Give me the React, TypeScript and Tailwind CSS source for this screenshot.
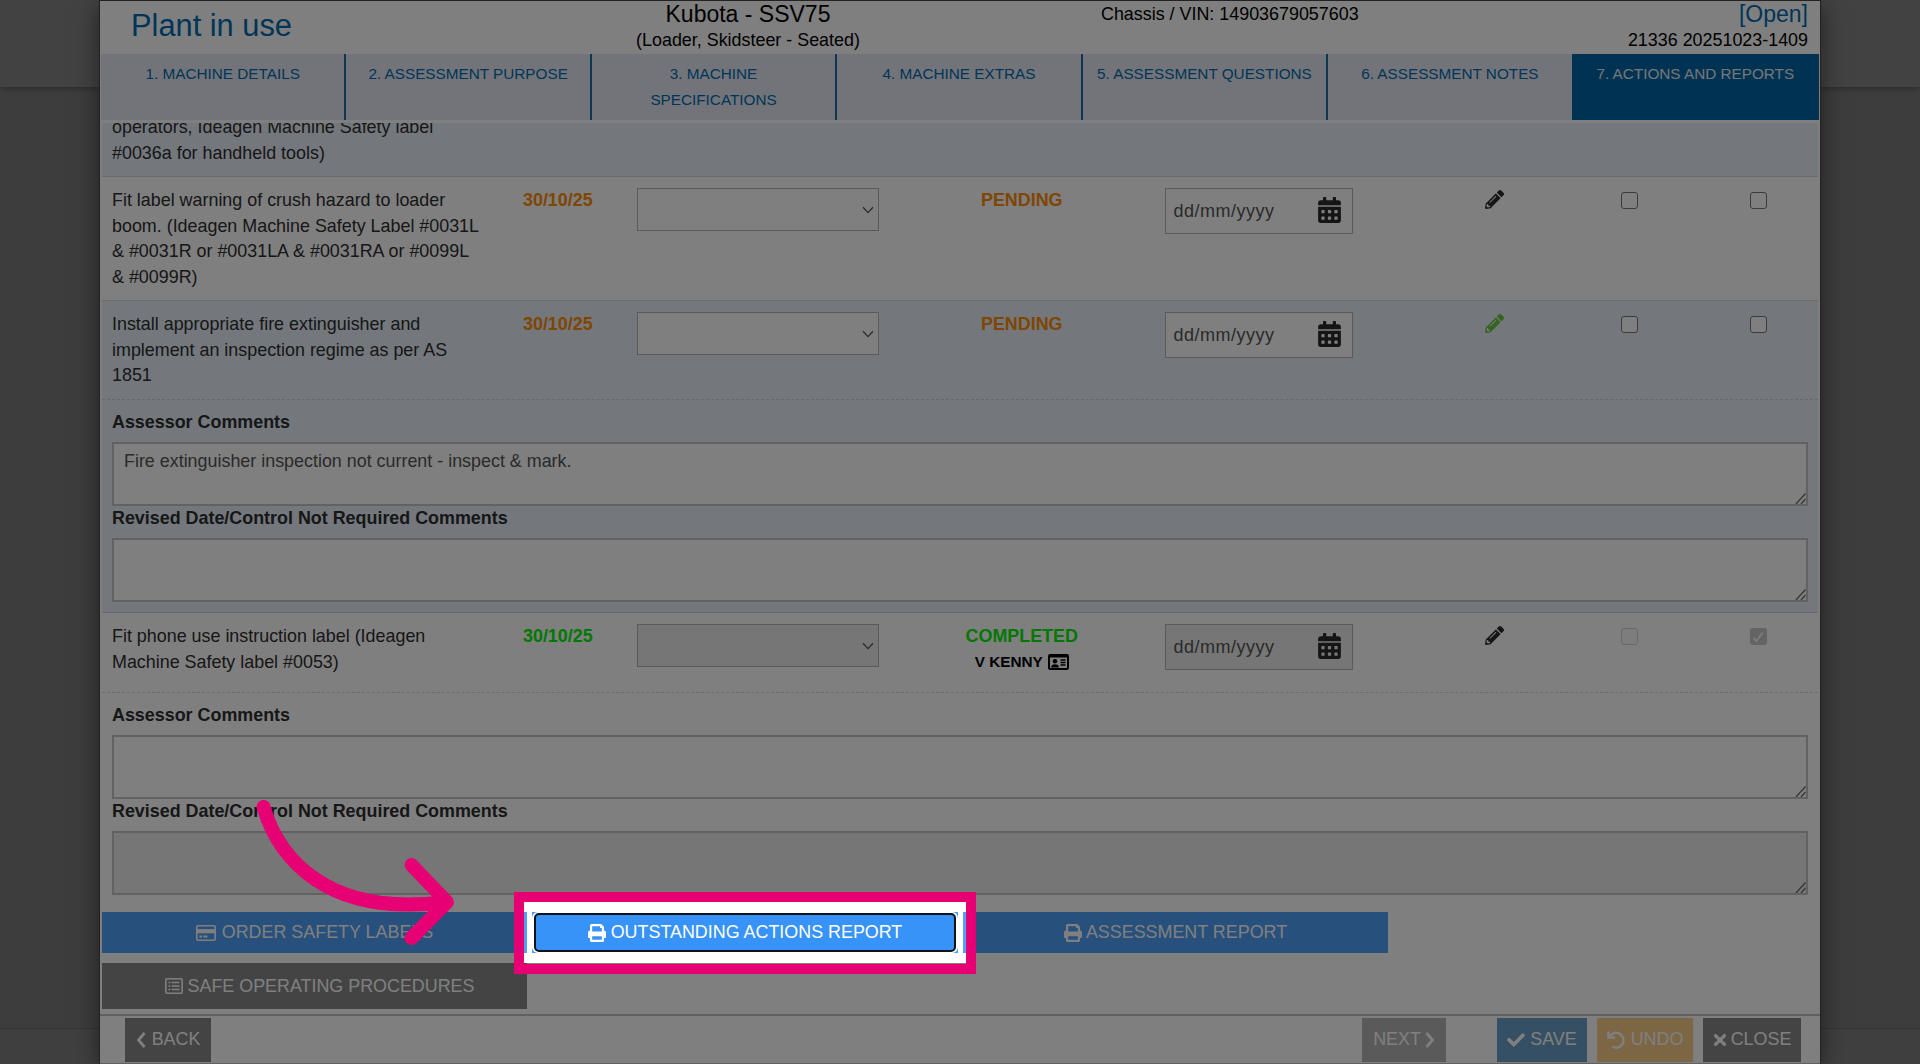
import React from "react";
import {
  FaPencilAlt,
  FaCalendarAlt,
  FaCheck,
  FaTimes,
} from "react-icons/fa";

type IconProps = { className?: string };

function ChevronIcon({ flip }: { flip?: boolean }) {
  return (
    <svg viewBox="0 0 10 16" className="h-4 w-[10px]" fill="none" stroke="currentColor" strokeWidth="2.800">
      <path d={flip ? "M1.500 1L7.500 8L1.500 15" : "M8.500 1L2.500 8L8.500 15"} />
    </svg>
  );
}

function PrinterIcon({ className }: IconProps) {
  return (
    <svg viewBox="0 0 18 18" className={className} fill="currentColor">
      <path
        fillRule="evenodd"
        d="M2 1.5A1.5 1.5 0 0 1 3.5 0H13.200L16 2.800V6.500A2 2 0 0 1 18 8.500V13a1 1 0 0 1-1 1H16v2.500A1.500 1.500 0 0 1 14.500 18h-11A1.500 1.500 0 0 1 2 16.500V14H1a1 1 0 0 1-1-1V8.500A2 2 0 0 1 2 6.500ZM4.200 2.200V7.500H13.800V4H12V2.200ZM4.200 12.200V15.800H13.800V12.200Z"
      />
    </svg>
  );
}

function CardIcon() {
  return (
    <svg viewBox="0 0 20 16" className="h-4 w-5" fill="none" stroke="currentColor" strokeWidth="1.600">
      <rect x="0.800" y="0.800" width="18.400" height="14.400" rx="1.200" />
      <path d="M1 6.200H19" strokeWidth="4.200" />
      <path d="M3.300 11.500H6M7.300 11.500H11.500" strokeWidth="1.800" />
    </svg>
  );
}

function ListIcon() {
  return (
    <svg viewBox="0 0 18 16" className="h-4 w-[18px]" fill="none" stroke="currentColor" strokeWidth="1.600">
      <rect x="0.800" y="0.800" width="16.400" height="14.400" rx="1.200" />
      <path d="M3.500 4.500H5.300M6.700 4.500H14.500M3.500 8H5.300M6.700 8H14.500M3.500 11.500H5.300M6.700 11.500H14.500" />
    </svg>
  );
}

function IdCardIcon() {
  return (
    <svg viewBox="0 0 21 16" className="h-4 w-[21px]" fill="none" stroke="currentColor">
      <rect x="1" y="1" width="19" height="14" rx="1.200" strokeWidth="2" />
      <path d="M1 2H20" strokeWidth="3" />
      <circle cx="7" cy="7.200" r="2.300" fill="currentColor" stroke="none" />
      <path d="M3.200 13.500c0-2.400 1.400-3.300 3.800-3.300s3.800.9 3.800 3.300z" fill="currentColor" stroke="none" />
      <path d="M12.500 6H17.500M12.500 8.500H17.500M12.500 11H17.500" strokeWidth="1.300" />
    </svg>
  );
}

function UndoIcon() {
  return (
    <svg viewBox="0 0 18 18" className="h-[18px] w-[18px]" fill="none" stroke="currentColor" strokeWidth="2.400">
      <path d="M1.500 0.500V6.500H8" />
      <path d="M2 6.200C5 1.500 10 0.600 13.400 3.200C17.600 6.500 17.300 12.500 13.500 15.300C11 17 8 17 5.500 15.500" />
    </svg>
  );
}

const tabs = [
  "1. MACHINE DETAILS",
  "2. ASSESSMENT PURPOSE",
  "3. MACHINE SPECIFICATIONS",
  "4. MACHINE EXTRAS",
  "5. ASSESSMENT QUESTIONS",
  "6. ASSESSMENT NOTES",
  "7. ACTIONS AND REPORTS",
];

function SelectBox({ disabled }: { disabled?: boolean }) {
  return (
    <div
      className={`flex h-[43px] w-[242px] items-center justify-end border-[1.5px] border-[#b4b4b4] pr-[4px] ${
        disabled ? "bg-[#ececec]" : "bg-white"
      }`}
    >
      <svg viewBox="0 0 12 8" className="h-2 w-3" fill="none" stroke="#555" strokeWidth="1.300">
        <path d="M1 1.200L6 6.600L11 1.200" />
      </svg>
    </div>
  );
}

function DateBox({ disabled }: { disabled?: boolean }) {
  return (
    <div
      className={`flex h-[46px] w-[188px] items-center justify-between border-[1.5px] border-[#b4b4b4] pr-[11px] pb-px pl-2 ${
        disabled ? "bg-[#ececec]" : "bg-white"
      }`}
    >
      <span className="pt-px text-[18px] tracking-[0.5px] text-[#555]">dd/mm/yyyy</span>
      <FaCalendarAlt className="mb-px h-[26px] w-[23px] text-[#2b2b2b]" />
    </div>
  );
}

function CheckBox({ state }: { state?: "disabled" | "checked" }) {
  if (state === "checked")
    return (
      <div className="flex size-[17px] items-center justify-center rounded-[3px] bg-[#c8c8c8]">
        <svg viewBox="0 0 12 12" className="size-3" fill="none" stroke="#f6f6f6" strokeWidth="2">
          <path d="M1.500 6.800L4.500 10L10.500 1.800" />
        </svg>
      </div>
    );
  return (
    <div
      className={`size-[17px] rounded-[3px] border-[1.5px] ${
        state === "disabled" ? "border-[#d0d0d0] bg-[#fbfbfb]" : "border-[#767676] bg-white"
      }`}
    />
  );
}

type RowProps = {
  lines: string[];
  done?: boolean;
  greenPencil?: boolean;
  className: string;
};

function ActionRow({ lines, done, greenPencil, className }: RowProps) {
  const tone = done ? "text-[#00f000]" : "text-[#ff8c00]";
  return (
    <div className={`flex shrink-0 items-start pl-[10px] ${className}`}>
      <div className="w-[411px] pt-[11px] leading-[25.500px]">
        {lines.map((l) => (
          <div key={l} className="whitespace-nowrap">{l}</div>
        ))}
      </div>
      <div className={`w-[114px] pt-[11px] leading-[25.4px] font-bold ${tone}`}>30/10/25</div>
      <div className="w-[242px] pt-[11px]"><SelectBox disabled={done} /></div>
      <div className={`w-[285.500px] pt-[11px] text-center leading-[25.4px] font-bold ${tone}`}>
        {done ? "COMPLETED" : "PENDING"}
        {done && (
          <div className="flex items-center justify-center gap-[5px] text-[15.300px] text-black">
            V KENNY <IdCardIcon />
          </div>
        )}
      </div>
      <div className="w-[188px] pt-[11px]"><DateBox disabled={done} /></div>
      <div className="w-[268px] pt-[13px] pl-[132px]">
        <FaPencilAlt className={`size-[19px] ${greenPencil ? "text-[#6cc83c]" : "text-[#2b2b2b]"}`} />
      </div>
      <div className="w-[129px] pt-[15px]"><CheckBox state={done ? "disabled" : undefined} /></div>
      <div className="pt-[15px]"><CheckBox state={done ? "checked" : undefined} /></div>
    </div>
  );
}

function CommentBox({ text, disabled }: { text?: string; disabled?: boolean }) {
  return (
    <div
      className={`flex h-[64px] shrink-0 justify-between border-2 border-[#c4c4c4] pl-[10px] text-[#555] ${
        disabled ? "bg-[#ececec]" : "bg-white"
      }`}
    >
      <span className="pt-[5px] leading-[25.4px]">{text}</span>
      <svg viewBox="0 0 11 11" className="size-[11px] self-end" stroke="#666" strokeWidth="1.200">
        <path d="M1 11L10.500 0.500M6 11L10.500 6" />
      </svg>
    </div>
  );
}

function Comments({ text, revisedDisabled, className }: { text?: string; revisedDisabled?: boolean; className: string }) {
  return (
    <div className={`flex shrink-0 flex-col px-[10px] ${className}`}>
      <div className="mt-[10px] h-8 shrink-0 leading-[25.4px] font-bold">Assessor Comments</div>
      <CommentBox text={text} />
      <div className="h-[32px] shrink-0 leading-[25.4px] font-bold">Revised Date/Control Not Required Comments</div>
      <CommentBox disabled={revisedDisabled} />
    </div>
  );
}

export default function App() {
  return (
    <div className="relative flex h-[1064px] w-[1920px] justify-center overflow-hidden bg-[#7a7a7a] font-['Liberation_Sans',Arial,sans-serif] text-[17.900px] text-[#2e2e2e]">
      {/* Page behind the dialog */}
      <div className="absolute inset-0 isolate flex flex-col">
        <div className="z-10 h-[87px] bg-[#848484] shadow-[0_2px_6px_rgba(0,0,0,0.25)]" />
        <div className="flex-1" />
        <div className="h-[36px] border-t border-[#666] bg-[#7f7f7f]" />
      </div>

      {/* Dialog */}
      <div className="relative flex h-[1064px] w-[1722px] flex-col border-x border-t border-[#444] bg-white px-[2px] shadow-[0_5px_22px_rgba(0,0,0,0.5)]">
        <header className="flex h-[53px] shrink-0 text-black">
          <h1 className="w-[440px] pt-[6px] pl-[29px] text-[30.800px] leading-[38px] text-[#006bb0]">Plant in use</h1>
          <div className="w-[412px] pt-px text-center">
            <div className="text-[23px] leading-[25px]">Kubota - SSV75</div>
            <div className="leading-[26px]">(Loader, Skidsteer - Seated)</div>
          </div>
          <div className="w-[552px] pt-px pl-[147px] leading-[25px]">Chassis / VIN: 14903679057603</div>
          <div className="flex-1 pt-px pr-[10px] text-right">
            <div className="text-[23px] leading-[25px] text-[#006bb0]">[Open]</div>
            <div className="leading-[26px]">21336 20251023-1409</div>
          </div>
        </header>

        <nav className="-mx-px grid h-[66px] shrink-0 grid-cols-7 text-[15.300px] leading-[25.500px] text-[#006bb0]">
          {tabs.map((t, i) => (
            <div
              key={t}
              className={`min-w-0 pt-[7px] text-center ${
                i === 6
                  ? "-ml-[2px] bg-[#0066a6] text-[#e8eef4]"
                  : i === 5
                    ? "bg-[#e6e9f2] pr-[2px]"
                    : i === 2
                      ? "border-r-2 border-[#1a6cab] bg-[#e6e9f2] px-10"
                      : "border-r-2 border-[#1a6cab] bg-[#e6e9f2]"
              }`}
            >
              {t}
            </div>
          ))}
        </nav>

        <main className="mt-[3px] flex h-[892px] shrink-0 flex-col overflow-hidden">
          <div className="flex h-[54px] shrink-0 flex-col justify-end border-b border-[#d0d2d5] bg-[#e8f0fa] pb-[10px] pl-[10px] leading-[25.4px]">
            <div>operators, Ideagen Machine Safety label</div>
            <div>#0036a for handheld tools)</div>
          </div>
          <ActionRow
            className="h-[124px] border-b border-[#d4d4d4]"
            lines={[
              "Fit label warning of crush hazard to loader",
              "boom. (Ideagen Machine Safety Label #0031L",
              "& #0031R or #0031LA & #0031RA or #0099L",
              "& #0099R)",
            ]}
          />
          <ActionRow
            className="h-[99px] border-b-[1.500px] border-dashed border-[#ccd0d6] bg-[#e8f0fa]"
            greenPencil
            lines={["Install appropriate fire extinguisher and", "implement an inspection regime as per AS", "1851"]}
          />
          <Comments
            className="h-[213px] border-b border-[#ccd0d6] bg-[#e8f0fa]"
            text="Fire extinguisher inspection not current - inspect & mark."
          />
          <ActionRow
            className="h-[80px] border-b-[1.500px] border-dashed border-[#d8d8d8]"
            done
            lines={["Fit phone use instruction label (Ideagen", "Machine Safety label #0053)"]}
          />
          <Comments className="h-[219px]" revisedDisabled />
          <div className="flex h-[41px] shrink-0 gap-[5.500px] text-white">
            <button className="flex w-[425px] items-center justify-center gap-[6px] bg-[#4ea0f8]">
              <CardIcon /> ORDER SAFETY LABELS
            </button>
            <button className="w-[425px] bg-[#4ea0f8]" aria-label="Report" />
            <button className="flex w-[425px] items-center justify-center gap-[4px] bg-[#4ea0f8]">
              <PrinterIcon className="size-[18px]" /> ASSESSMENT REPORT
            </button>
          </div>
          <button className="mt-[10px] flex h-[46px] w-[425px] shrink-0 items-center justify-center gap-[5px] bg-[#888] pl-[10px] text-white">
            <ListIcon /> SAFE OPERATING PROCEDURES
          </button>
        </main>

        <footer className="-mx-[2px] flex h-[50px] shrink-0 items-start border-t-2 border-b border-[#c0c0c0] pt-[2px] pl-[25px] text-white -mt-px">
          <button className="flex h-[44px] w-[86px] items-center justify-center gap-[6px] bg-[#888] pb-px">
            <ChevronIcon /> BACK
          </button>
          <button className="ml-[1151px] flex h-[44px] w-[84px] items-center justify-center gap-[4px] bg-[#b4b4b4] pb-px">
            NEXT <ChevronIcon flip />
          </button>
          <button className="ml-[51px] flex h-[44px] w-[90px] items-center justify-center gap-[5px] bg-[#6aa0c8] pb-px">
            <FaCheck className="size-[18px]" /> SAVE
          </button>
          <button className="ml-[10px] flex h-[44px] w-[96px] items-center justify-center gap-[6px] bg-[#f8cc88] pb-px">
            <UndoIcon /> UNDO
          </button>
          <button className="ml-[10px] flex h-[44px] w-[98px] items-center justify-center gap-[4px] bg-[#888] pb-px">
            <FaTimes className="h-[18px] w-[14px]" /> CLOSE
          </button>
        </footer>
      </div>

      {/* Spotlight: dims everything outside the highlighted button */}
      <div className="absolute top-[902px] left-[524px] h-[61px] w-[442px] shadow-[0_0_0_2000px_rgba(0,0,0,0.5)]" />
      <div className="absolute top-[892px] left-[514px] flex h-[82px] w-[462px] items-center justify-center border-[10px] border-[#e60073] pb-px">
        <div className="flex h-[41px] w-[426px] items-center justify-center bg-[#4b9df8]">
          <div className="flex h-[41px] w-[426px] items-center justify-center rounded-[6px] bg-white">
            <button className="flex h-[39px] w-[422px] items-center justify-center gap-[5px] rounded-[5px] border-2 border-[#101418] bg-[#3793f8] text-white">
              <PrinterIcon className="size-[18px]" /> OUTSTANDING ACTIONS REPORT
            </button>
          </div>
        </div>
      </div>

      <svg viewBox="0 0 206 160" className="absolute top-[790px] left-[254px] h-[160px] w-[206px]" fill="none" stroke="#e60073" strokeWidth="14" strokeLinecap="round" strokeLinejoin="round">
        <path d="M9.500 17C24 66 71 128 192 112" />
        <path d="M157.500 75L193 112L157.500 148" />
      </svg>
    </div>
  );
}
